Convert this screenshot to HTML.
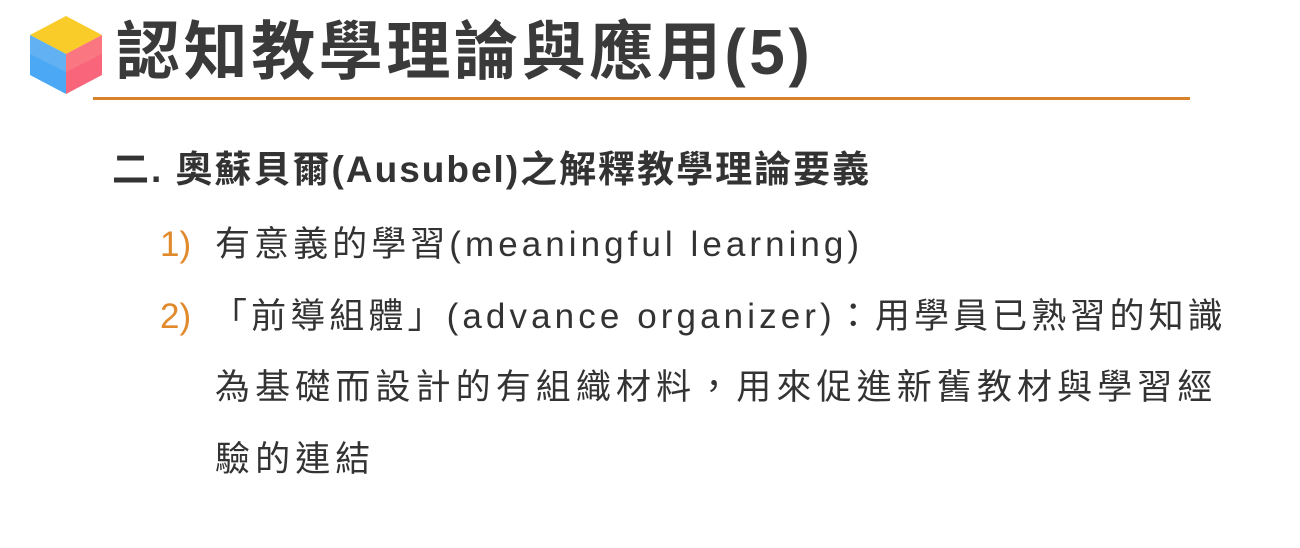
<!DOCTYPE html>
<html><head><meta charset="utf-8"><style>
html,body{margin:0;padding:0;background:#fff;width:1300px;height:548px;overflow:hidden;position:relative;font-family:"Liberation Sans","Noto Sans CJK TC",sans-serif;color:#333}
.a{position:absolute;white-space:nowrap;line-height:1}
.t{left:116px;top:20px;font-size:64px;font-weight:bold;color:#3a3a3a;letter-spacing:3.6px}
.h{left:112px;top:151px;font-size:37px;font-weight:bold;color:#333;letter-spacing:2px}
.l{font-size:35px;color:#333;letter-spacing:4px}
.n{color:#e08a2c;letter-spacing:0}
</style></head><body>
<svg class="a" style="left:28px;top:14px" width="76" height="82" viewBox="0 0 76 82">
<polygon points="38,2 74,21 38,40 2,21" fill="#f9cc2a"/>
<polygon points="2,21 38,40 38,80 2,61" fill="#4aa8f5"/>
<polygon points="38,40 74,21 74,61 38,80" fill="#f9657a"/>
<polygon points="38,40 2,21 2,40 38,58" fill="#7ab9f0" opacity="0.5"/>
<polygon points="38,40 74,21 74,40 38,58" fill="#fb8a8a" opacity="0.5"/>
</svg>
<div class="a t">認知教學理論與應用(5)</div>
<div class="a" style="left:93px;top:97px;width:1097px;height:3px;background:#d9822b"></div>
<div class="a h">二. 奧蘇貝爾(Ausubel)之解釋教學理論要義</div>
<div class="a l n" style="left:160px;top:227px">1)</div>
<div class="a l" style="left:215px;top:227px;letter-spacing:4.05px">有意義的學習(meaningful learning)</div>
<div class="a l n" style="left:160px;top:299px">2)</div>
<div class="a l" style="left:212px;top:299px;letter-spacing:4.1px">「前導組體」(advance organizer)：用學員已熟習的知識</div>
<div class="a l" style="left:215px;top:370px;letter-spacing:5.1px">為基礎而設計的有組織材料，用來促進新舊教材與學習經</div>
<div class="a l" style="left:215px;top:442px;letter-spacing:5.1px">驗的連結</div>
</body></html>
